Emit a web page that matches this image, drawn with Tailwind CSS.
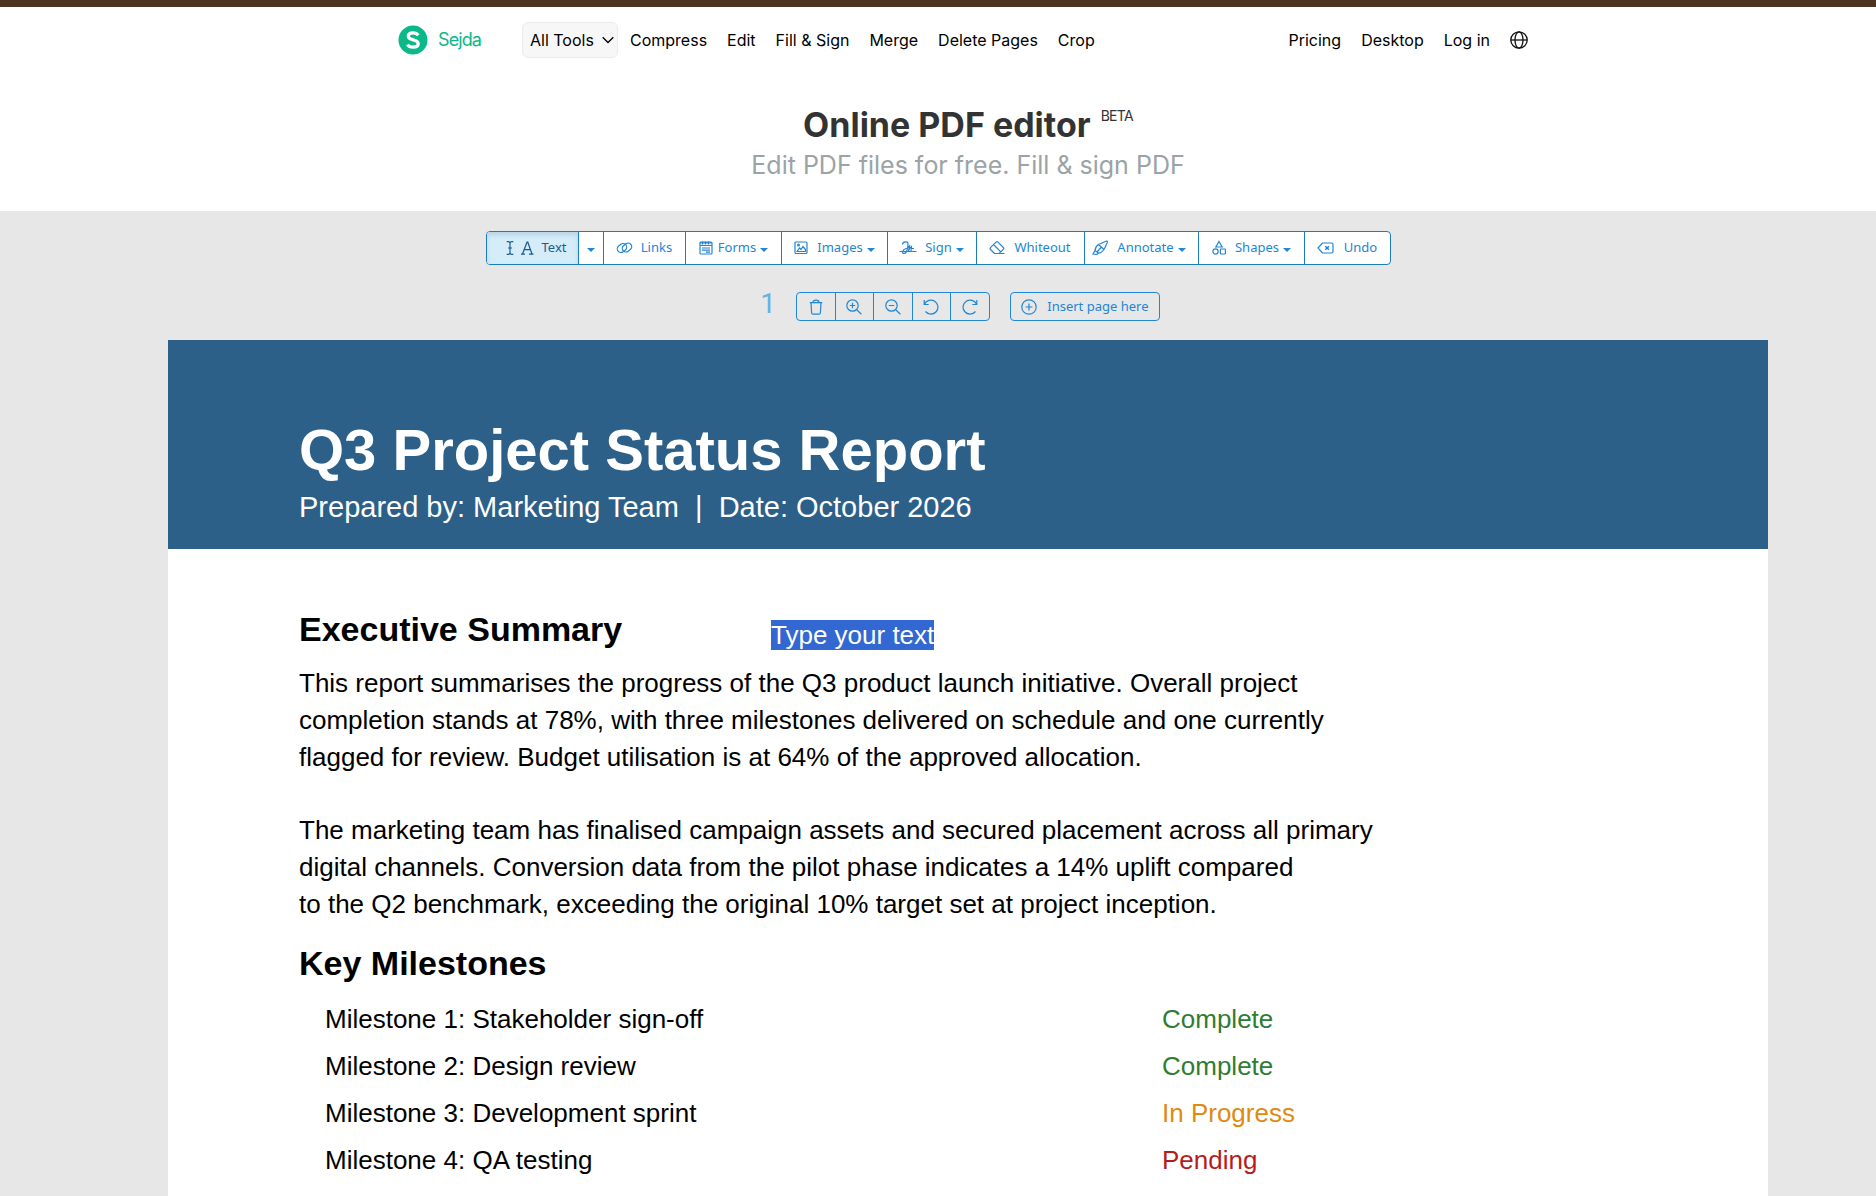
<!DOCTYPE html>
<html lang="en">
<head>
    <meta charset="UTF-8">
    <meta name="viewport" content="width=device-width, initial-scale=1.0">
    <title>Online PDF editor - Sejda</title>
    <script src="https://cdn.jsdelivr.net/npm/@tailwindcss/browser@4"></script>
</head>
<body class="min-h-screen flex flex-col bg-[#e7e7e7] font-['Liberation_Sans',sans-serif] text-black">

    <!-- Header -->
    <header class="bg-white border-t-[7px] border-[#4b3520] pl-[60px] h-[211px] shrink-0">
        <div class="max-w-[1140px] mx-auto pt-[15px] flex items-center font-[Inter,sans-serif] text-base">
            <a href="#" class="flex items-center gap-[10px] mr-[38px] text-[#0bb88a] text-lg tracking-tighter w-[86px]">
                <svg class="size-[30px] shrink-0" viewBox="0 0 30 30">
                    <circle cx="15" cy="15" r="14.5" fill="#0bb88a"/>
                    <path d="M20.3 10.2c-1.2-1.5-3-2.3-5.2-2.3-2.9 0-4.8 1.3-4.8 3.4 0 4.9 9.9 2.3 9.9 7.3 0 2.200-2 3.600-5.100 3.600-2.500 0-4.500-.9-5.700-2.600" fill="none" stroke="#fff" stroke-width="3.300"/>
                </svg>
                Sejda
            </a>
            <nav class="flex items-center gap-5 flex-1">
                <button class="flex items-center gap-2 h-9 w-24 pl-[7px] bg-[#f7f7f7] border border-[#ececec] rounded-md -mr-2 whitespace-nowrap">
                    All Tools
                    <svg class="w-3 h-2 shrink-0" viewBox="0 0 12 8" fill="none" stroke="#000" stroke-width="1.300"><path d="M.7 1.200 6 6.500l5.300-5.300"/></svg>
                </button>
                <a href="#">Compress</a>
                <a href="#">Edit</a>
                <a href="#">Fill &amp; Sign</a>
                <a href="#">Merge</a>
                <a href="#">Delete Pages</a>
                <a href="#">Crop</a>
            </nav>
            <nav class="flex items-center gap-5 pr-[10px]">
                <a href="#">Pricing</a>
                <a href="#">Desktop</a>
                <a href="#">Log in</a>
                <button aria-label="Language">
                    <svg class="size-[18px] block" viewBox="0 0 18 18" fill="none" stroke="#111" stroke-width="1.300"><circle cx="9" cy="9" r="8.200"/><ellipse cx="9" cy="9" rx="4" ry="8.200"/><path d="M.8 9h16.400"/></svg>
                </button>
            </nav>
        </div>
        <div class="text-center font-[Inter,sans-serif] mt-[45px]">
            <h1 class="text-[34px] leading-[44px] font-bold text-[#333] flex justify-center gap-[10px]">
                Online PDF editor
                <sup class="text-sm font-normal leading-5 tracking-tighter top-0 pt-[3px]">BETA</sup>
            </h1>
            <p class="text-[25px] leading-[36px] text-[#9ba3a6]">Edit PDF files for free. Fill &amp; sign PDF</p>
        </div>
    </header>

    <main class="flex-1 flex flex-col pt-5">

        <!-- Editing tools -->
        <div class="flex justify-center font-['Noto_Sans',sans-serif] text-[13px] text-[#2186d5]">
            <div class="flex h-[34px] bg-white border border-[#1a7dbd] rounded divide-x divide-[#1a7dbd] overflow-hidden">
                <button class="w-[92px] flex items-center justify-center gap-2 pl-2 bg-[#d5edf9] text-[#175d92] shadow-[inset_0_3px_5px_#b5d4e4]">
                    <svg class="w-7 h-[14px]" viewBox="0 0 28 14" fill="none" stroke="currentColor" stroke-width="1.200"><path d="M.7.7h1.500q1.500 0 1.800 1.300Q4.300.7 5.800.7h1.500M.7 13.300h1.500q1.500 0 1.800-1.300.3 1.300 1.800 1.300h1.500M4 2v10M2 7h4"/><path d="M15 13.200h4M23 13.200h4.500M16.500 13 21 1.200h.8L26 13M18.300 8.700h6.200"/></svg>
                    Text
                </button>
                <button class="w-[25px] flex items-center justify-center pt-[3px]" aria-label="Text options">
                    <svg class="w-2 h-1" viewBox="0 0 8 4" fill="currentColor"><path d="M0 0h8L4 4z"/></svg>
                </button>
                <button class="w-[82px] flex items-center justify-center gap-2">
                    <svg class="w-[17px] h-4" viewBox="0 0 17 16" fill="none" stroke="currentColor" stroke-width="1.200"><rect x="-5" y="-3.600" width="10" height="7.200" rx="3.600" transform="translate(6 8) rotate(-38)"/><rect x="-5" y="-3.600" width="10" height="7.200" rx="3.600" transform="translate(11 7.500) rotate(-38)"/></svg>
                    Links
                </button>
                <button class="w-24 flex items-center justify-center gap-1">
                    <svg class="size-4 shrink-0" viewBox="0 0 16 16" fill="none" stroke="currentColor" stroke-width="1.200"><rect x="2" y="2" width="12" height="12" rx="1"/><path d="M2 2.800h12M2 5.500h12M4 8h8M4 10.200h8M8 12.200h4M4.500 1.500v3M7.500 1.500v3M10.500 1.500v3"/></svg>
                    Forms
                    <svg class="w-2 h-1 mt-1 shrink-0" viewBox="0 0 8 4" fill="currentColor"><path d="M0 0h8L4 4z"/></svg>
                </button>
                <button class="w-[106px] flex items-center justify-center gap-1">
                    <svg class="size-4 mr-1 shrink-0" viewBox="0 0 16 16" fill="none" stroke="currentColor" stroke-width="1.200"><rect x="2" y="2" width="12" height="11.500" rx="1"/><path d="M4 11.500 6.500 8l1.500 1.500 2-3 2.500 3v2H4z"/><circle cx="5.500" cy="5" r=".9"/></svg>
                    Images
                    <svg class="w-2 h-1 mt-1 shrink-0" viewBox="0 0 8 4" fill="currentColor"><path d="M0 0h8L4 4z"/></svg>
                </button>
                <button class="w-[89px] flex items-center justify-center gap-1">
                    <svg class="w-[18px] h-4 mr-1 shrink-0" viewBox="0 0 18 16" fill="none" stroke="currentColor" stroke-width="1.200"><path d="M.5 11.500h17M3.500 4.500C3.500 1.300 9 1 9 3.500 9 7.500 8 13.500 5 13.500 2.500 13.500 3.500 9.500 7 8.500c1.500-.5 2.500-1.500 3.500-2.500l-1 5c.8-2.500 1.500-3.500 3-4.500l-.5 4.500M12 8.500h3"/></svg>
                    Sign
                    <svg class="w-2 h-1 mt-1 shrink-0" viewBox="0 0 8 4" fill="currentColor"><path d="M0 0h8L4 4z"/></svg>
                </button>
                <button class="w-[108px] flex items-center justify-center gap-2">
                    <svg class="w-[17px] h-4 shrink-0" viewBox="0 0 17 16" fill="none" stroke="currentColor" stroke-width="1.200"><path d="m5.500 13.500-4-4q-.9-.9 0-1.800l5.500-5.500q1-1 2 0l5.300 5.300q.9.9 0 1.800l-4.200 4.200zM4.700 4.800l7.400 7.300M5.500 13.500h10"/></svg>
                    Whiteout
                </button>
                <button class="w-[114px] flex items-center justify-center gap-1 pr-1">
                    <svg class="w-[17px] h-4 mr-1 shrink-0" viewBox="0 0 17 16" fill="none" stroke="currentColor" stroke-width="1.200"><path d="m1 14 2-3.500q.3-4 3.500-6L14 1.200q1.800-.5 1.300 1.300L12 9.500q-2.200 3.300-5.500 3.700L5 14.400zM6.500 4.500l5.500 5M3.200 10.500 6.300 13M5 12l4-4.500"/></svg>
                    Annotate
                    <svg class="w-2 h-1 mt-1 shrink-0" viewBox="0 0 8 4" fill="currentColor"><path d="M0 0h8L4 4z"/></svg>
                </button>
                <button class="w-[106px] flex items-center justify-center gap-1">
                    <svg class="size-4 mr-1 shrink-0" viewBox="0 0 16 16" fill="none" stroke="currentColor" stroke-width="1.200"><path d="M8 1.500 11.200 7H4.800z"/><circle cx="4.500" cy="11.500" r="2.600"/><rect x="9.400" y="9" width="5" height="5" rx=".5"/></svg>
                    Shapes
                    <svg class="w-2 h-1 mt-1 shrink-0" viewBox="0 0 8 4" fill="currentColor"><path d="M0 0h8L4 4z"/></svg>
                </button>
                <button class="w-[85px] flex items-center justify-center gap-[10px]">
                    <svg class="w-[17px] h-4 shrink-0" viewBox="0 0 17 16" fill="none" stroke="currentColor" stroke-width="1.200"><path d="M1 8 5.500 3h9q1.500 0 1.500 1.500v7q0 1.500-1.500 1.500h-9z"/><path d="m8.300 6.200 3.600 3.600M11.900 6.200 8.300 9.800" stroke-width="1.500"/></svg>
                    Undo
                </button>
            </div>
        </div>

        <!-- Page actions -->
        <div class="mt-[27px] pl-[60px] pr-4 flex justify-center items-center font-['Noto_Sans',sans-serif] text-[13px] text-[#2186d5]">
            <span class="self-start font-[Roboto,sans-serif] text-[28px] leading-6 text-[#6ab0e6] mr-5">1</span>
            <div class="flex h-[29px] border border-[#2186d5] rounded-sm divide-x divide-[#2186d5]">
                <button class="w-[39px] flex items-center justify-center" aria-label="Delete page">
                    <svg class="size-4" viewBox="0 0 16 16" fill="none" stroke="currentColor" stroke-width="1.200"><path d="M1.800 3.600h12.400M5 3.500q0-2.300 3-2.300t3 2.300M3 3.800l.6 10q.1 1.400 1.500 1.400h5.800q1.400 0 1.500-1.400l.6-10"/></svg>
                </button>
                <button class="w-[38px] flex items-center justify-center" aria-label="Zoom in">
                    <svg class="size-4" viewBox="0 0 16 16" fill="none" stroke="currentColor" stroke-width="1.200"><circle cx="6.500" cy="6.500" r="5.700"/><path d="m10.700 10.700 4.700 4.500M3.800 6.500h5.400M6.500 3.800v5.400"/></svg>
                </button>
                <button class="w-[39px] flex items-center justify-center" aria-label="Zoom out">
                    <svg class="size-4" viewBox="0 0 16 16" fill="none" stroke="currentColor" stroke-width="1.200"><circle cx="6.500" cy="6.500" r="5.700"/><path d="m10.700 10.700 4.700 4.500M3.800 6.500h5.400"/></svg>
                </button>
                <button class="w-[38px] flex items-center justify-center" aria-label="Rotate left">
                    <svg class="size-4" viewBox="0 0 16 16" fill="none" stroke="currentColor" stroke-width="1.200"><path d="M1.200 1v4.500h4.500M1.500 5.300A7 7 0 1 1 2.500 12.500"/></svg>
                </button>
                <button class="w-[38px] flex items-center justify-center" aria-label="Rotate right">
                    <svg class="size-4" viewBox="0 0 16 16" fill="none" stroke="currentColor" stroke-width="1.200"><path d="M14.800 1v4.500h-4.500M14.500 5.300A7 7 0 1 0 13.500 12.500"/></svg>
                </button>
            </div>
            <button class="ml-5 h-[29px] w-[150px] border border-[#2186d5] rounded-sm flex items-center justify-center gap-[10px]">
                <svg class="size-4 shrink-0" viewBox="0 0 16 16" fill="none" stroke="currentColor" stroke-width="1.200"><circle cx="8" cy="8" r="7.200"/><path d="M8 4.600v6.800M4.600 8h6.800"/></svg>
                Insert page here
            </button>
        </div>

        <!-- Document page -->
        <div class="flex-1 flex flex-col mt-[19px] pl-[60px]">
            <article class="relative flex-1 w-full max-w-[1600px] mx-auto bg-white">
                <div class="bg-[#2c6089] text-white px-[131px] pt-[78px] pb-6">
                    <h2 class="text-[58px] leading-[64px] font-bold">Q3 Project Status Report</h2>
                    <p class="mt-[7px] text-[29px] leading-[36px]">Prepared by: Marketing Team&nbsp; |&nbsp; Date: October 2026</p>
                </div>
                <div class="px-[131px] pt-[60px] text-[26px] leading-[37px]">
                    <h3 class="text-[34px] leading-[40px] font-bold">Executive Summary</h3>
                    <p class="mt-4">
                        This report summarises the progress of the Q3 product launch initiative. Overall project<br>
                        completion stands at 78%, with three milestones delivered on schedule and one currently<br>
                        flagged for review. Budget utilisation is at 64% of the approved allocation.
                    </p>
                    <p class="mt-9">
                        The marketing team has finalised campaign assets and secured placement across all primary<br>
                        digital channels. Conversion data from the pilot phase indicates a 14% uplift compared<br>
                        to the Q2 benchmark, exceeding the original 10% target set at project inception.
                    </p>
                    <h3 class="mt-5 text-[34px] leading-[40px] font-bold">Key Milestones</h3>
                    <table class="mt-[13px] ml-[26px]">
                        <tr class="h-[47px]"><td class="w-[837px]">Milestone 1: Stakeholder sign-off</td><td class="text-[#2e7d32]">Complete</td></tr>
                        <tr class="h-[47px]"><td>Milestone 2: Design review</td><td class="text-[#2e7d32]">Complete</td></tr>
                        <tr class="h-[47px]"><td>Milestone 3: Development sprint</td><td class="text-[#e08a10]">In Progress</td></tr>
                        <tr class="h-[47px]"><td>Milestone 4: QA testing</td><td class="text-[#b71c1c]">Pending</td></tr>
                    </table>
                </div>
                <!-- Text box placed on the page -->
                <input type="text" aria-label="Text box" value="Type your text" class="absolute left-[603px] top-[280px] field-sizing-content h-[30px] text-[26px] leading-[30px] bg-[#3367d1] text-white outline-none">
            </article>
        </div>
    </main>
</body>
</html>
